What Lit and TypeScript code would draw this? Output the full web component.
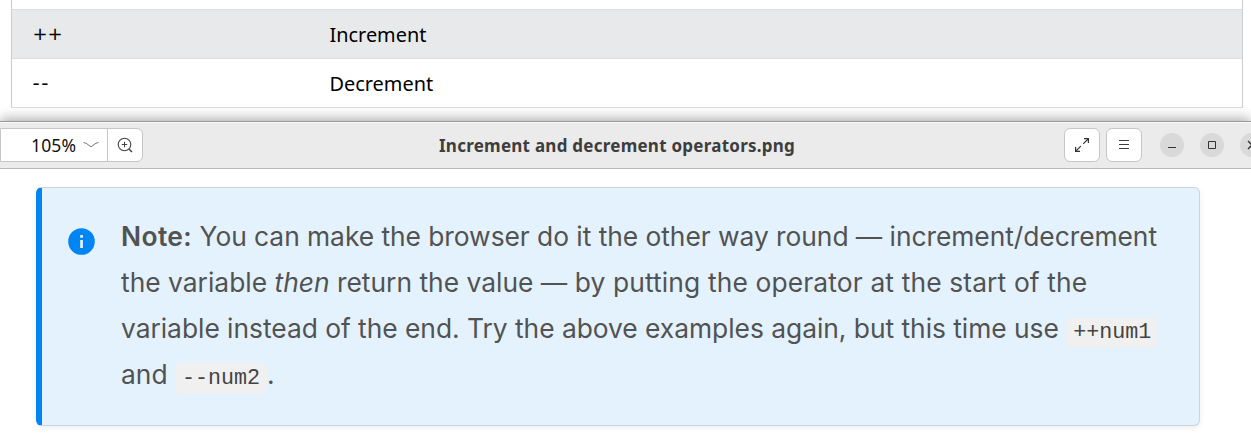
import { LitElement, html, css } from "lit";
import { customElement } from "lit/decorators.js";

@customElement("operator-table")
class OperatorTable extends LitElement {
  static styles = css`
    :host { display: block; height: 121px; overflow: hidden; background: #fff; box-sizing: border-box; padding: 0 8px 0 11px; font: 19px/48px "Noto Sans", sans-serif; color: #000; }
    .table { border: 1px solid #ccc; border-top: 0; border-bottom-color: #ddd; }
    .head { height: 9px; }
    .row { display: grid; grid-template-columns: 297px 1fr; height: 48px; padding-left: 20.5px; border-top: 1px solid #ddd; }
    .shade { background: #e7e9eb; }
    .symbol { font-family: "DejaVu Sans", sans-serif; font-size: 18px; }
    .minus { font-size: 20px; letter-spacing: 1.5px; }
    .name { font-size: 19.9px; line-height: 49px; }
  `;
  render() {
    return html`<div class="table">
      <div class="head"></div>
      <div class="row shade"><span class="symbol">++</span><span class="name">Increment</span></div>
      <div class="row"><span class="symbol minus">--</span><span class="name">Decrement</span></div>
    </div>`;
  }
}

@customElement("viewer-bar")
class ViewerBar extends LitElement {
  static styles = css`
    :host { display: flex; align-items: center; position: relative; box-sizing: border-box; height: 48px; border-top: 1px solid #999; border-bottom: 1px solid #b9b9b9; background: #ebebeb; box-shadow: inset 0 1px #fafafa, 0 -2px 12px rgba(0,0,0,.35); clip-path: inset(-20px 0 0 0); font-family: "Noto Sans", sans-serif; }
    .zoom { display: flex; box-sizing: border-box; width: 143px; height: 34px; border: 1px solid #c6c6c6; border-radius: 0 6px 6px 0; background: #fff; }
    .level { box-sizing: border-box; width: 107px; border-right: 1px solid #c6c6c6; display: flex; align-items: center; padding-left: 30px; font-size: 17.5px; letter-spacing: .15px; color: #111; }
    .level svg { margin-left: 7px; }
    .plus { flex: 1; display: flex; align-items: center; justify-content: center; }
    .title { margin-left: 296px; width: 366px; white-space: nowrap; font-size: 17px; font-weight: 700; color: #3d3d3d; letter-spacing: .25px; }
    .tools { margin-left: auto; display: flex; align-items: center; width: 187px; flex: none; }
    .button { box-sizing: border-box; width: 36px; height: 34px; border: 1px solid #c6c6c6; border-radius: 6px; background: #fff; margin-right: 6px; display: flex; align-items: center; justify-content: center; flex: none; }
    .round { width: 24px; height: 24px; border-radius: 50%; background: #d9d9d9; margin-right: 16px; flex: none; }
    .round:nth-child(3) { margin-left: 12px; }
    .clip { width: 11px; height: 24px; overflow: hidden; flex: none; }
    svg { display: block; flex: none; }
  `;
  render() {
    return html`
      <div class="zoom">
        <div class="level"><span>105%</span><svg width="16" height="8" fill="none" stroke="#777"><path d="M.5 1.5 3 2.2 8 5.8 13 2.2 15.5 1.5"/></svg></div>
        <div class="plus"><svg width="16" height="16" fill="none" stroke="#444" stroke-width="1.1"><circle cx="7.5" cy="7.5" r="6.3"/><path d="M7.5 4.8v5.4M4.8 7.5h5.4"/><path d="m12 12 3 3" stroke-width="1.5"/></svg></div>
      </div>
      <div class="title">Increment and decrement operators.png</div>
      <div class="tools">
        <div class="button"><svg width="16" height="16" fill="none" stroke="#333" stroke-width="1.2"><path d="M10 1.6h4.4V6M14.2 1.8 9.2 6.8M1.6 10v4.4H6M1.8 14.2l5-5"/></svg></div>
        <div class="button"><svg width="12" height="12" stroke="#3d3d3d"><path d="M1 1.5h10M1 5.5h10M1 9.5h10"/></svg></div>
        <div class="round"><svg width="24" height="24" stroke="#333"><path d="M8 14.5h8"/></svg></div>
        <div class="round"><svg width="24" height="24" fill="none" stroke="#333"><path d="M8.5 8.5h7v7h-7z"/></svg></div>
        <div class="clip"><div class="round"><svg width="24" height="24" stroke="#333" stroke-width="1.4"><path d="m8 8 8 8M16 8l-8 8"/></svg></div></div>
      </div>`;
  }
}

@customElement("note-card")
class NoteCard extends LitElement {
  static styles = css`
    :host { display: flex; box-sizing: border-box; width: 1164px; height: 239px; margin: 18px 0 0 36px; border: 1px solid #cdd3d9; border-left: 6px solid #0085f2; border-radius: 6px; background: #e4f2fe; box-shadow: 0 2px 6px rgba(0,0,0,.07); color: #525252; font: 26.4px/46.2px Inter, sans-serif; }
    .icon { display: block; margin: 40px 26px 0 26px; flex: none; }
    .lines { padding-top: 25px; }
    .line { white-space: nowrap; height: 46px; }
    .first { letter-spacing: -.052px; }
    .third { letter-spacing: -.035px; }
    .wide { letter-spacing: .13px; }
    b { font-weight: 600; letter-spacing: .4px; }
    code { font: 21.7px/30px "Liberation Mono", monospace; letter-spacing: 0; background: #f0f0f0; border-radius: 6px; padding: 3px 7px; color: #444; }
  `;
  render() {
    return html`
      <svg class="icon" width="27" height="27"><circle cx="13.5" cy="13.5" r="13.3" fill="#0085f2"/><path d="M12.2 7h2.7v2.7h-2.7zM12.2 12.1h2.7v7.9h-2.7z" fill="#e4f2fe"/></svg>
      <div class="lines">
        <div class="line first"><b>Note:</b> You can make the browser do it the other way round — increment/decrement</div>
        <div class="line">the variable <i>then</i> return the value — <span class="wide">by putting the operator at the start of the</span></div>
        <div class="line third">variable instead of the end. Try the above examples again, but this time use <code>++num1</code></div>
        <div class="line">and <code>--num2</code>.</div>
      </div>`;
  }
}

@customElement("app-root")
class AppRoot extends LitElement {
  static styles = css`
    :host { display: block; width: 1251px; height: 439px; overflow: hidden; background: #fff; }
  `;
  render() {
    return html`<operator-table></operator-table><viewer-bar></viewer-bar><note-card></note-card>`;
  }
}
